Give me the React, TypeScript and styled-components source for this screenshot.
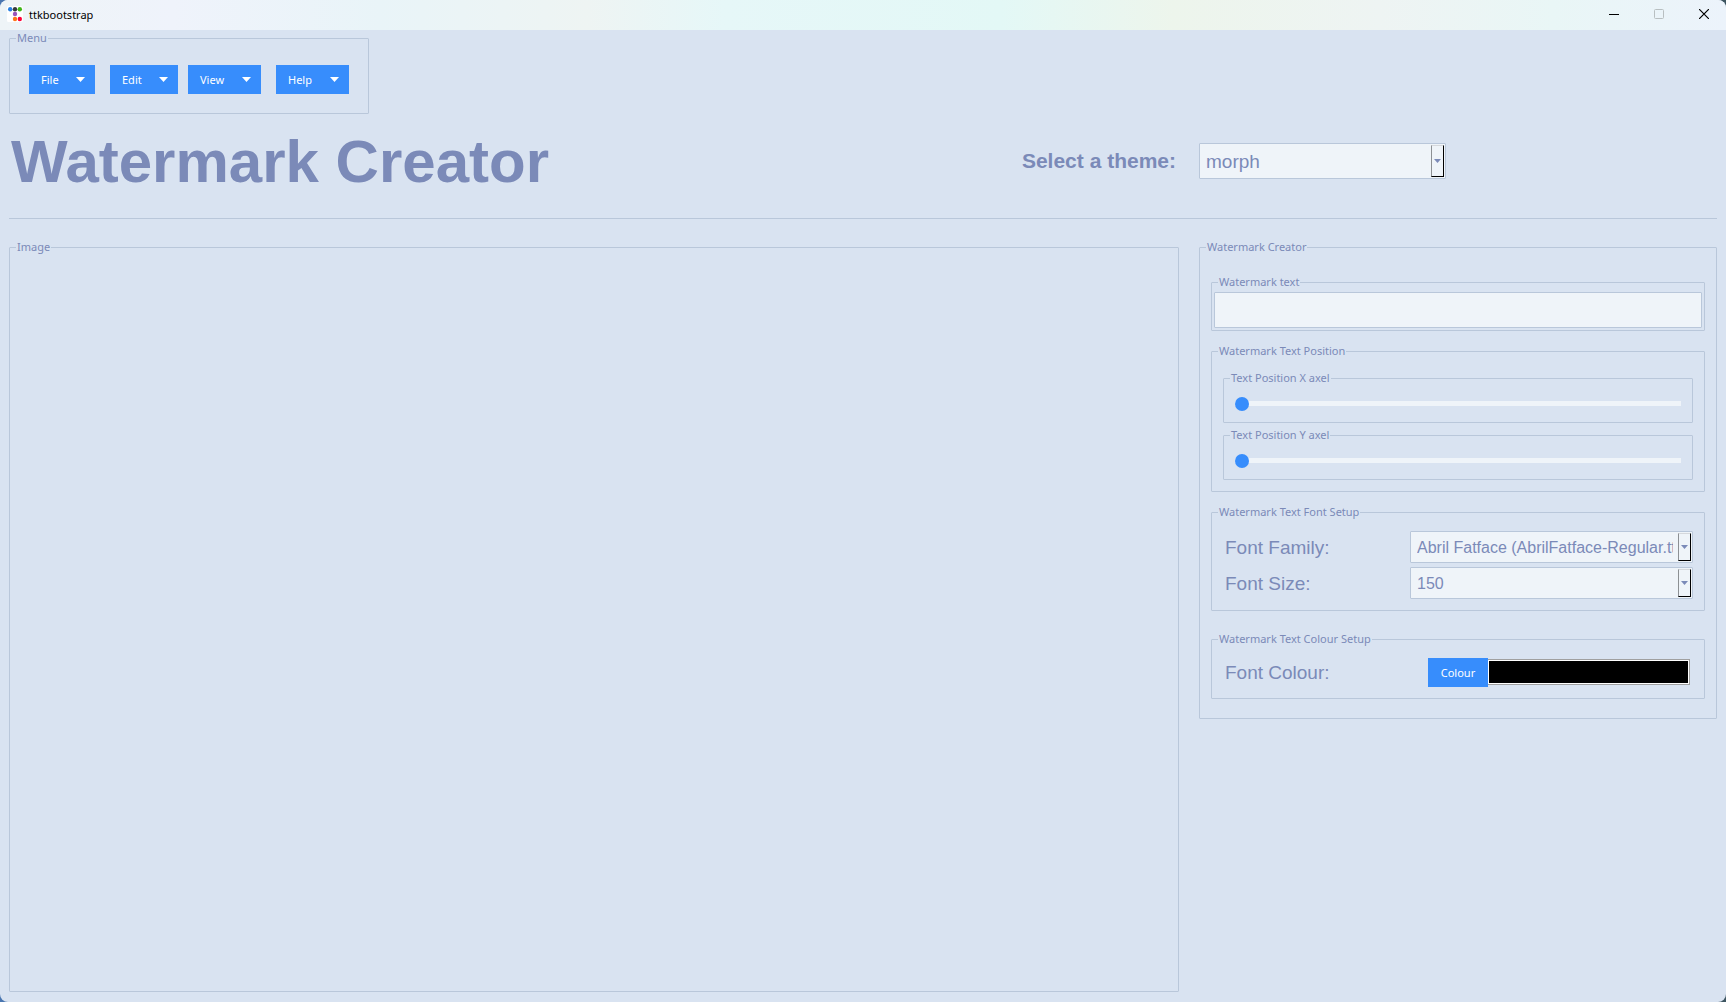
import React, { useState } from "react";
import type { ReactNode } from "react";
import styled, { createGlobalStyle } from "styled-components";

const color = {
  bg: "#d9e3f1",
  field: "#eff4f9",
  border: "#b9c7da",
  text: "#7b8ab8",
  primary: "#378dfc",
};
const ui = `"Noto Sans", "Open Sans", sans-serif`;
const arial = `"Liberation Sans", Arial, sans-serif`;

const GlobalStyle = createGlobalStyle`
  *, *::before, *::after { box-sizing: border-box; }
  html { background: linear-gradient(90deg, #4a76b0, #3d5560 30%, #3d5560); }
  body { margin: 0; color: ${color.text}; font: 11px/15px ${ui}; }
`;

const Window = styled.div`
  min-height: 100vh;
  display: flex;
  flex-direction: column;
  overflow: hidden;
  border-radius: 8px;
  background: ${color.bg};
`;

const TitleBar = styled.header`
  height: 30px;
  display: flex;
  align-items: center;
  padding: 0 0 2px 7px;
  color: #000;
  background: linear-gradient(90deg, #eef4f7 0%, #eff3fb 10%, #e9f4f8 22%, #eef4f3 34%, #e6f7f8 42%, #e3f8f6 58%, #edf5ec 68%, #eef4f3 80%, #e9f6f6 90%, #ecf3fb 100%);
`;

const WindowName = styled.span`
  flex: 1;
  margin-left: 6px;
`;

const WindowButton = styled.button`
  width: 45px;
  height: 28px;
  display: grid;
  place-items: center;
  padding: 0;
  border: 0;
  background: none;
  color: #000;
  &:disabled { color: #b8bfc1; }
`;

const Content = styled.div`
  flex: 1;
  display: flex;
  flex-direction: column;
  padding: 1px 9px 10px;
`;

const Frame = styled.fieldset`
  min-width: 0;
  margin: 0;
  padding: 0;
  border: 1px solid ${color.border};
  border-radius: 1px;
`;

const FrameTitle = styled.legend`
  height: 15px;
  margin-left: 6px;
  padding: 0 1px;
  line-height: 13px;
`;

const FrameBody = styled.div<{ $pad: string }>`
  padding: ${(p) => p.$pad};
`;

const Stack = styled.div<{ $gap: number }>`
  display: flex;
  flex-direction: column;
  gap: ${(p) => p.$gap}px;
`;

const MenuFrame = styled(Frame)`
  align-self: flex-start;
`;

const MenuBar = styled.nav`
  display: flex;
`;

const Button = styled.button`
  min-width: 60px;
  height: 29px;
  display: flex;
  align-items: center;
  justify-content: center;
  padding: 0 12px;
  border: 0;
  background: ${color.primary};
  color: #fff;
  font: 11px/15px ${ui};
`;

const MenuButton = styled(Button)<{ $width: number; $after: number }>`
  justify-content: space-between;
  width: ${(p) => p.$width}px;
  margin-right: ${(p) => p.$after}px;
  padding-right: 10px;
`;

const Columns = styled.div`
  display: grid;
  grid-template-columns: minmax(0, 1fr) 518px;
  column-gap: 20px;
`;

const Heading = styled(Columns)`
  align-items: center;
  height: 104px;
  padding-bottom: 10px;
`;

const HeadingText = styled.div`
  display: flex;
  align-items: center;
  justify-content: space-between;
  padding: 0 3px 0 2px;
  font-family: ${arial};
`;

const Title = styled.h1`
  margin: 0;
  padding-top: 2px;
  font-size: 60px;
  line-height: 70px;
`;

const ThemeLabel = styled.label`
  font-size: 21px;
  line-height: 24px;
  font-weight: bold;
  font-kerning: none;
`;

const Separator = styled.hr`
  width: 100%;
  height: 1px;
  margin: 0 0 21px;
  border: 0;
  background: ${color.border};
`;

const Workspace = styled(Columns)`
  flex: 1;
`;

const Panel = styled(Frame)`
  align-self: start;
`;

const TextEntry = styled.input`
  display: block;
  width: 100%;
  height: 36px;
  padding: 0 6px;
  border: 1px solid ${color.border};
  border-radius: 1px;
  background: ${color.field};
  color: ${color.text};
  font: 19px/24px ${arial};
`;

const Slider = styled.input`
  display: block;
  appearance: none;
  width: 100%;
  height: 14px;
  margin: 0;
  background: linear-gradient(${color.field}, ${color.field}) 0 4px / 100% 5px no-repeat;
  &::-webkit-slider-thumb {
    appearance: none;
    width: 14px;
    height: 14px;
    border-radius: 50%;
    background: ${color.primary};
  }
`;

const Row = styled.div`
  display: flex;
  align-items: center;
  justify-content: space-between;
  padding-left: 2px;
`;

const FieldLabel = styled.label`
  padding-top: 1px;
  font: 19px/24px ${arial};
`;

const ComboBox = styled.div<{ $width: number; $height: number }>`
  position: relative;
  width: ${(p) => p.$width}px;
  height: ${(p) => p.$height}px;
`;

const ComboSelect = styled.select<{ $size: number }>`
  appearance: none;
  width: 100%;
  height: 100%;
  padding: 2px 19px 0 6px;
  border: 1px solid ${color.border};
  border-radius: 1px;
  background: ${color.field};
  color: ${color.text};
  font: ${(p) => p.$size}px/24px ${arial};
`;

const ComboArrow = styled.span`
  position: absolute;
  top: 2px;
  right: 2px;
  bottom: 2px;
  width: 13px;
  display: grid;
  place-items: center;
  border: 1px solid;
  border-color: #d5d8dc #000 #000 #8c9094;
  background: ${color.field};
  pointer-events: none;
`;

const ColourPicker = styled.div`
  display: flex;
  align-items: center;
  padding-right: 3px;
`;

const Swatch = styled.output`
  width: 202px;
  height: 26px;
  margin-bottom: 1px;
  border: 1px solid #a0a0a0;
  border-left: 0;
  box-shadow: inset 0 0 0 1px #fff;
  background: #000;
`;

const CaretDown = ({ width, height }: { width: number; height: number }) => (
  <svg width={width} height={height} viewBox="0 0 10 5" preserveAspectRatio="none" aria-hidden="true">
    <path d="M0 0H10L5 5Z" fill="currentColor" />
  </svg>
);

const AppIcon = () => (
  <svg width="16" height="16" viewBox="0 0 16 16" aria-hidden="true">
    <rect width="16" height="16" rx="1.5" fill="#fff" />
    <circle cx="3.2" cy="3.2" r="2.2" fill="#2780e3" />
    <circle cx="8" cy="3.2" r="2.2" fill="#373a3c" />
    <circle cx="12.8" cy="3.2" r="2.2" fill="#3fb618" />
    <circle cx="8" cy="8" r="2.2" fill="#9954bb" />
    <circle cx="8" cy="13" r="2.2" fill="#ff7518" />
    <circle cx="12.8" cy="13" r="2.2" fill="#ff0039" />
  </svg>
);

type LabelFrameProps = { title: string; pad?: string; as?: typeof Frame; children?: ReactNode };

const LabelFrame = ({ title, pad = "11px", as: Box = Frame, children }: LabelFrameProps) => (
  <Box>
    <FrameTitle>{title}</FrameTitle>
    <FrameBody $pad={pad}>{children}</FrameBody>
  </Box>
);

type ComboProps = { id: string; width: number; height: number; size: number; options: string[] };

const Combo = ({ id, width, height, size, options }: ComboProps) => (
  <ComboBox $width={width} $height={height}>
    <ComboSelect id={id} $size={size}>
      {options.map((o) => (
        <option key={o}>{o}</option>
      ))}
    </ComboSelect>
    <ComboArrow>
      <CaretDown width={7} height={4} />
    </ComboArrow>
  </ComboBox>
);

const menus = [
  { name: "File", width: 66, after: 15 },
  { name: "Edit", width: 68, after: 10 },
  { name: "View", width: 73, after: 15 },
  { name: "Help", width: 73, after: 0 },
];

export default function App() {
  const [text, setText] = useState("");
  const [x, setX] = useState(0);
  const [y, setY] = useState(0);

  return (
    <>
      <GlobalStyle />
      <Window>
        <TitleBar>
          <AppIcon />
          <WindowName>ttkbootstrap</WindowName>
          <WindowButton aria-label="Minimize">
            <svg width="10" height="10" viewBox="0 0 10 10">
              <path d="M0 5.5H10" stroke="currentColor" />
            </svg>
          </WindowButton>
          <WindowButton aria-label="Maximize" disabled>
            <svg width="10" height="10" viewBox="0 0 10 10">
              <rect x=".5" y=".5" width="9" height="9" rx="1" fill="none" stroke="currentColor" />
            </svg>
          </WindowButton>
          <WindowButton aria-label="Close">
            <svg width="10" height="10" viewBox="0 0 10 10">
              <path d="M0 0L10 10M10 0L0 10" stroke="currentColor" strokeWidth="1.2" />
            </svg>
          </WindowButton>
        </TitleBar>

        <Content>
          <LabelFrame title="Menu" pad="19px" as={MenuFrame}>
            <MenuBar>
              {menus.map((m) => (
                <MenuButton key={m.name} $width={m.width} $after={m.after}>
                  {m.name}
                  <CaretDown width={9} height={5} />
                </MenuButton>
              ))}
            </MenuBar>
          </LabelFrame>

          <Heading>
            <HeadingText>
              <Title>Watermark Creator</Title>
              <ThemeLabel htmlFor="theme">Select a theme:</ThemeLabel>
            </HeadingText>
            <Combo id="theme" width={247} height={36} size={19} options={["morph"]} />
          </Heading>
          <Separator />

          <Workspace>
            <LabelFrame title="Image" />

            <LabelFrame title="Watermark Creator" pad="20px 11px 19px" as={Panel}>
              <Stack $gap={13}>
                <LabelFrame title="Watermark text" pad="2px">
                  <TextEntry aria-label="Watermark text" value={text} onChange={(e) => setText(e.target.value)} />
                </LabelFrame>

                <LabelFrame title="Watermark Text Position" pad="12px 11px 11px">
                  <Stack $gap={5}>
                    <LabelFrame title="Text Position X axel">
                      <Slider type="range" aria-label="Text Position X axel" value={x} onChange={(e) => setX(+e.target.value)} />
                    </LabelFrame>
                    <LabelFrame title="Text Position Y axel">
                      <Slider type="range" aria-label="Text Position Y axel" value={y} onChange={(e) => setY(+e.target.value)} />
                    </LabelFrame>
                  </Stack>
                </LabelFrame>

                <Stack $gap={21}>
                  <LabelFrame title="Watermark Text Font Setup">
                    <Stack $gap={4}>
                      <Row>
                        <FieldLabel htmlFor="family">Font Family:</FieldLabel>
                        <Combo id="family" width={283} height={32} size={16} options={["Abril Fatface (AbrilFatface-Regular.ttf)"]} />
                      </Row>
                      <Row>
                        <FieldLabel htmlFor="size">Font Size:</FieldLabel>
                        <Combo id="size" width={283} height={32} size={16} options={["150"]} />
                      </Row>
                    </Stack>
                  </LabelFrame>

                  <LabelFrame title="Watermark Text Colour Setup">
                    <Row>
                      <FieldLabel htmlFor="colour">Font Colour:</FieldLabel>
                      <ColourPicker>
                        <Button id="colour">Colour</Button>
                        <Swatch htmlFor="colour" aria-label="Black" />
                      </ColourPicker>
                    </Row>
                  </LabelFrame>
                </Stack>
              </Stack>
            </LabelFrame>
          </Workspace>
        </Content>
      </Window>
    </>
  );
}
